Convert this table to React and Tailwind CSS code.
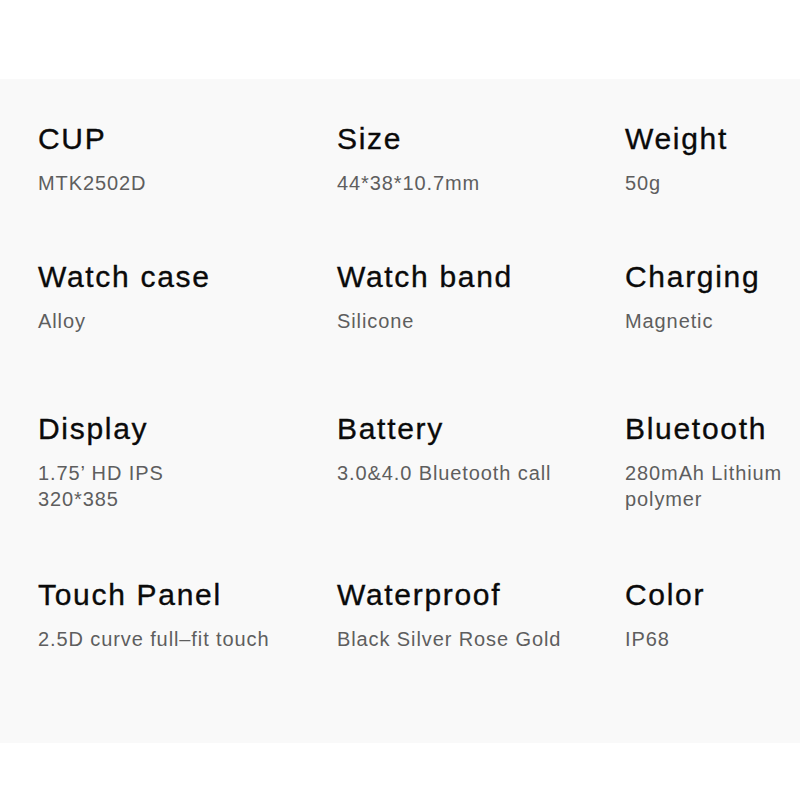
export default function App() {
  const rows = [
    {
      mt: "mt-0",
      items: [
        { t: "CUP", s: ["MTK2502D"] },
        { t: "Size", s: ["44*38*10.7mm"] },
        { t: "Weight", s: ["50g"] },
      ],
    },
    {
      mt: "mt-[66px]",
      items: [
        { t: "Watch case", s: ["Alloy"] },
        { t: "Watch band", s: ["Silicone"] },
        { t: "Charging", s: ["Magnetic"] },
      ],
    },
    {
      mt: "mt-[80px]",
      items: [
        { t: "Display", s: ["1.75\u2019 HD IPS", "320*385"] },
        { t: "Battery", s: ["3.0&4.0 Bluetooth call"] },
        { t: "Bluetooth", s: ["280mAh Lithium", "polymer"] },
      ],
    },
    {
      mt: "mt-[68px]",
      items: [
        { t: "Touch Panel", s: ["2.5D curve full\u2013fit touch"] },
        { t: "Waterproof", s: ["Black Silver Rose Gold"] },
        { t: "Color", s: ["IP68"] },
      ],
    },
  ];
  return (
    <div className="w-[800px] h-[800px] bg-white overflow-hidden font-['Liberation_Sans',Arial,sans-serif]">
      <div className="mt-[79px] h-[664px] bg-[#f9f9f9] pt-[45px] pl-[38px]">
        {rows.map((row, i) => (
          <div key={i} className={`grid grid-cols-[299px_288px_1fr] ${row.mt}`}>
            {row.items.map((it) => (
              <div key={it.t} className="flex flex-col">
                <div className="text-[30px] leading-[30px] tracking-[1.7px] text-[#0a0a0a] [-webkit-text-stroke:0.35px_#0a0a0a] whitespace-nowrap">
                  {it.t}
                </div>
                <div className="mt-4 text-[20px] leading-[26px] tracking-[0.9px] text-[#5e5e5e] whitespace-nowrap">
                  {it.s.map((line) => (
                    <div key={line}>{line}</div>
                  ))}
                </div>
              </div>
            ))}
          </div>
        ))}
      </div>
    </div>
  );
}
